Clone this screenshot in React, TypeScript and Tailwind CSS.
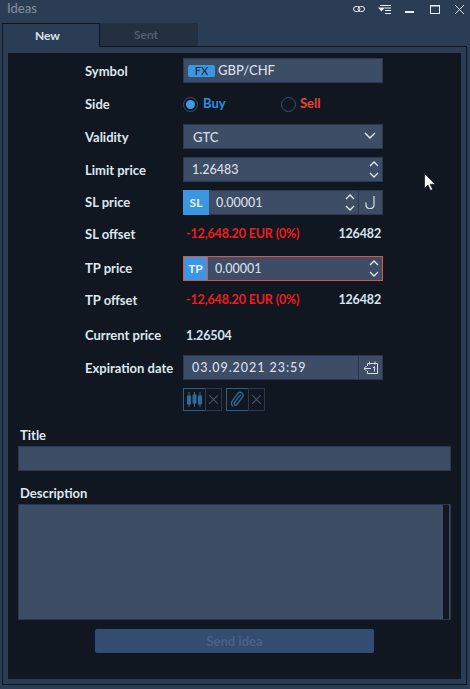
import React from "react";

const Up = () => (
  <svg width="10" height="6" viewBox="0 0 10 6" fill="none" stroke="#e4e8ee" strokeWidth="1.3"><path d="M1 5l4-4 4 4" /></svg>
);
const Down = () => (
  <svg width="10" height="6" viewBox="0 0 10 6" fill="none" stroke="#e4e8ee" strokeWidth="1.3"><path d="M1 1l4 4 4-4" /></svg>
);
const Spin = () => (
  <div className="flex flex-col items-center gap-[5px] w-[10px] shrink-0">
    <Up />
    <Down />
  </div>
);

function Row({ label, labelClass = "", children }: { label: string; labelClass?: string; children: React.ReactNode }) {
  return (
    <div className="flex items-center h-[25px]">
      <div className={`w-[98px] text-[13px] font-bold text-[#dfe6ee] ${labelClass}`}>{label}</div>
      <div className="w-[200px] flex items-center h-full">{children}</div>
    </div>
  );
}

const Field = ({ children, className = "" }: { children?: React.ReactNode; className?: string }) => (
  <div className={`flex items-center w-full h-[25px] bg-[#3e4d66] border border-[#2c3850] text-[#d8dfe8] text-[13px] font-medium ${className}`}>
    {children}
  </div>
);

const Offset = () => (
  <div className="flex items-center justify-between w-full pl-[3px] pr-[2px] text-[12.5px] font-bold tracking-[-0.15px] -mt-[2px]">
    <span className="text-[#ee1c1c]">-12,648.20 EUR (0%)</span>
    <span className="text-[#d8e4f0]">126482</span>
  </div>
);

export default function App() {
  return (
    <div className="relative w-[470px] h-[689px] overflow-hidden bg-[#2b3d55] [font-family:Lato,'Noto_Sans',sans-serif]">
      <div className="flex items-center justify-between h-[18px] mb-[5px] pl-[7px] pr-[6px]">
        <span className="text-[13px] text-[#7f8c9c] font-medium">Ideas</span>
        <div className="flex items-center">
          <svg width="12" height="6" viewBox="0 0 12 6" fill="none" stroke="#e8edf3" strokeWidth="1"><rect x="0.5" y="0.5" width="6.500" height="5" rx="2.500" /><rect x="5" y="0.5" width="6.500" height="5" rx="2.500" /></svg>
          <svg width="13" height="9" viewBox="0 0 13 9" fill="none" stroke="#e8edf3" strokeWidth="1" className="ml-[13px]"><path d="M2 .5h11M7 3h6M7 5.500h6M7 8.500h6" /><path d="M0 2.500h7L3.500 6.500z" fill="#e8edf3" stroke="none" /></svg>
          <svg width="9" height="9" viewBox="0 0 9 9" className="ml-[14px]"><rect y="6" width="9" height="2" fill="#e8edf3" /></svg>
          <svg width="10" height="9" viewBox="0 0 10 9" fill="none" stroke="#e8edf3" strokeWidth="1" className="ml-[16px]"><rect x="0.5" y="0.5" width="9" height="8" /><path d="M0 1h10" /></svg>
          <svg width="9" height="9" viewBox="0 0 9 9" fill="none" stroke="#e8edf3" strokeWidth="0.9" className="ml-[15px]"><path d="M0 0l9 9M9 0L0 9" /></svg>
        </div>
      </div>

      <div className="relative z-10 flex h-[24px] ml-[2px] -mb-px">
        <div className="w-[98px] h-[24px] flex items-center justify-center pr-[7px] bg-[#2b3d55] border border-b-0 border-[#0f1620] text-[12px] font-bold text-[#dbe3ec]">New</div>
        <div className="w-[98px] h-[23px] flex items-center justify-center pr-[6px] bg-[#22303f] text-[12px] font-bold text-[#525e6e]">Sent</div>
      </div>

      <div className="ml-[2px] w-[465px] h-[639px] border border-[#0f1620] pt-[6px] pl-[5px]">
        <div className="w-[453px] h-[626px] bg-[#101721] px-[10px] pt-[5px]">
          <div className="pl-[67px] flex flex-col gap-[8px]">
            <Row label="Symbol" labelClass="pt-[3px]">
              <Field className="pl-[4px] gap-[3px]">
                <span className="w-[27px] h-[12px] rounded-[2px] bg-[#3a97e0] text-[#12283d] text-[11px] leading-[12px] text-center font-medium">FX</span>
                <span className="pt-px">GBP/CHF</span>
              </Field>
            </Row>
            <Row label="Side" labelClass="pt-[2px]">
              <div className="flex items-center w-[98px] gap-[5px] pt-px">
                <span className="w-[15px] h-[15px] rounded-full border border-[#3e4d66] flex items-center justify-center">
                  <span className="w-[9px] h-[9px] rounded-full bg-[#3a9be8]" />
                </span>
                <span className="text-[13px] font-bold text-[#2f8fe0]">Buy</span>
              </div>
              <div className="flex items-center gap-[4px] pt-px">
                <span className="w-[15px] h-[15px] rounded-full border border-[#3e4d66]" />
                <span className="text-[13px] font-bold text-[#e8452e]">Sell</span>
              </div>
            </Row>
            <Row label="Validity" labelClass="pt-[3px]">
              <Field className="pl-[9px] pr-[6px] justify-between">
                <span className="pt-[3px]">GTC</span>
                <svg width="12" height="7" viewBox="0 0 12 7" fill="none" stroke="#e4e8ee" strokeWidth="1.4" className="-mt-[2px]"><path d="M1 1l5 5 5-5" /></svg>
              </Field>
            </Row>
            <Row label="Limit price" labelClass="pt-[2px]">
              <Field className="pl-[8px] pr-[3px] justify-between">
                <span className="text-[12.5px] pt-px">1.26483</span>
                <Spin />
              </Field>
            </Row>
            <Row label="SL price">
              <Field>
                <span className="-ml-px -my-px w-[26px] h-[25px] shrink-0 bg-[#3a97e0] text-[#e6f2fb] text-[12px] font-bold flex items-center justify-center">SL</span>
                <span className="ml-[7px] text-[12.5px] flex-1 pt-px">0.00001</span>
                <Spin />
                <span className="ml-[3px] w-[24px] h-full shrink-0 border-l border-[#2c3850] flex items-center justify-center">
                  <svg width="11" height="15" viewBox="0 0 11 15" fill="none" stroke="#d8dfe8" strokeWidth="1.200"><path d="M9 1v9a3.500 3.500 0 0 1-3.500 3.500h-1A3.500 3.500 0 0 1 1 10V7.500" /></svg>
                </span>
              </Field>
            </Row>
            <Row label="SL offset" labelClass="-mt-[2px]"><Offset /></Row>
            <Row label="TP price">
              <Field className="border-[#e8503f]">
                <span className="-ml-px w-[25px] h-full shrink-0 bg-[#3a97e0] border-l border-r border-[#e8503f] text-[#e6f2fb] text-[12px] font-bold flex items-center justify-center">TP</span>
                <span className="ml-[7px] text-[12.5px] flex-1 pt-px">0.00001</span>
                <span className="mr-[3px]"><Spin /></span>
              </Field>
            </Row>
            <Row label="TP offset" labelClass="-mt-[2px]"><Offset /></Row>
            <Row label="Current price" labelClass="pt-[3px]">
              <span className="pl-[3px] pt-[3px] text-[12.5px] font-bold tracking-[-0.1px] text-[#d8e4f0]">1.26504</span>
            </Row>
            <Row label="Expiration date" labelClass="pt-[2px]">
              <Field>
                <span className="ml-[8px] flex-1 text-[12.5px] tracking-[0.95px] pt-[2px]">03.09.2021 23:59</span>
                <span className="w-[24px] h-full shrink-0 border-l border-[#2c3850] flex items-center justify-center">
                  <svg width="14" height="13" viewBox="0 0 14 13" fill="none" stroke="#d8dfe8" strokeWidth="1"><path d="M3.500 5V2.500h10v10h-10V10M5.500 .5v3M11 .5v3" /><path d="M0 7.500h7M2.500 5L0 7.500 2.500 10" /><path d="M10.500 5.500v5M9 7l1.500-1.500" /></svg>
                </span>
              </Field>
            </Row>
            <div className="flex pl-[98px] gap-[4px] h-[23px]">
              <div className="flex">
                <span className="w-[23px] h-[23px] border border-[#2e5f85] flex items-center justify-center">
                  <svg width="15" height="15" viewBox="0 0 15 15" stroke="#2f6a99" fill="#2f6a99"><path d="M2 0v15M7.500 0v15M13 0v15" /><rect x="0.5" y="4" width="3" height="8" /><rect x="6" y="3" width="3" height="8" /><rect x="11.500" y="4" width="3" height="8" /></svg>
                </span>
                <span className="-ml-px w-[17px] h-[23px] border border-[#2c3850] flex items-center justify-center">
                  <svg width="9" height="9" viewBox="0 0 9 9" stroke="#46556b" strokeWidth="1.100"><path d="M0 0l9 9M9 0L0 9" /></svg>
                </span>
              </div>
              <div className="flex">
                <span className="w-[23px] h-[23px] border border-[#2e5f85] flex items-center justify-center">
                  <svg width="15" height="17" viewBox="0 0 14 16" fill="none" stroke="#2f6a99" strokeWidth="1.300"><path d="M10 3.500L4 11a1.500 1.500 0 0 0 2.300 1.900l5.500-7.400a2.800 2.800 0 0 0-4.400-3.400L2 9.500a3.600 3.600 0 0 0 .8 5" /></svg>
                </span>
                <span className="-ml-px w-[17px] h-[23px] border border-[#2c3850] flex items-center justify-center">
                  <svg width="9" height="9" viewBox="0 0 9 9" stroke="#46556b" strokeWidth="1.100"><path d="M0 0l9 9M9 0L0 9" /></svg>
                </span>
              </div>
            </div>
          </div>

          <div className="mt-[15px] pl-[2px] h-[20px] text-[13px] font-bold text-[#dfe6ee] leading-[18px]">Title</div>
          <div className="h-[25px] w-[433px] bg-[#3e4d66] border border-[#2c3850]" />
          <div className="mt-[13px] pl-[2px] h-[20px] text-[13px] font-bold text-[#dfe6ee] leading-[18px]">Description</div>
          <div className="h-[116px] w-[433px] bg-[#3e4d66] border border-[#2c3850] flex justify-end pr-[1px]">
            <div className="w-[6px] h-full bg-[#101721]" />
          </div>
          <div className="mt-[9px] ml-[77px] w-[279px] h-[24px] rounded-[2px] bg-[#324c72] flex items-center justify-center pt-[2px] text-[13px] font-bold text-[#4b6284]">Send idea</div>
        </div>
      </div>

      <svg width="12" height="18" viewBox="0 0 12 18" className="absolute left-[424px] top-[173px]"><path d="M.5.500v15l3.500-3.500 2.500 5.500 2.200-1-2.500-5.200h5z" fill="#fff" stroke="#111" strokeWidth="0.700" /></svg>
    </div>
  );
}
